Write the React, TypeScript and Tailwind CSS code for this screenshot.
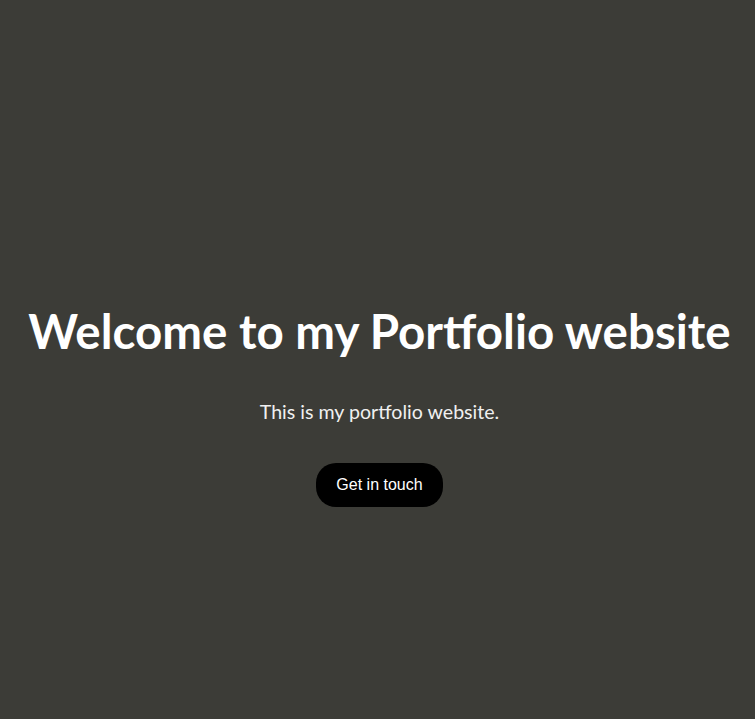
export default function App() {
  return (
    <div className="min-h-screen w-full bg-[#3c3c37] flex flex-col items-center pt-[302px] pl-[4px]">
      <h1 className="text-[47.5px] leading-[58px] font-bold text-white text-center whitespace-nowrap font-[Lato,'Open_Sans',sans-serif]">
        Welcome to my Portfolio website
      </h1>
      <p className="mt-[40px] text-[19.6px] leading-[24px] text-[#f0f0f0] font-[Lato,'Open_Sans',sans-serif]">
        This is my portfolio website.
      </p>
      <button className="mt-[39px] w-[127px] h-[44px] rounded-[20px] bg-black text-white text-[16px] font-['Liberation_Sans',Arial,sans-serif]">
        Get in touch
      </button>
    </div>
  );
}
